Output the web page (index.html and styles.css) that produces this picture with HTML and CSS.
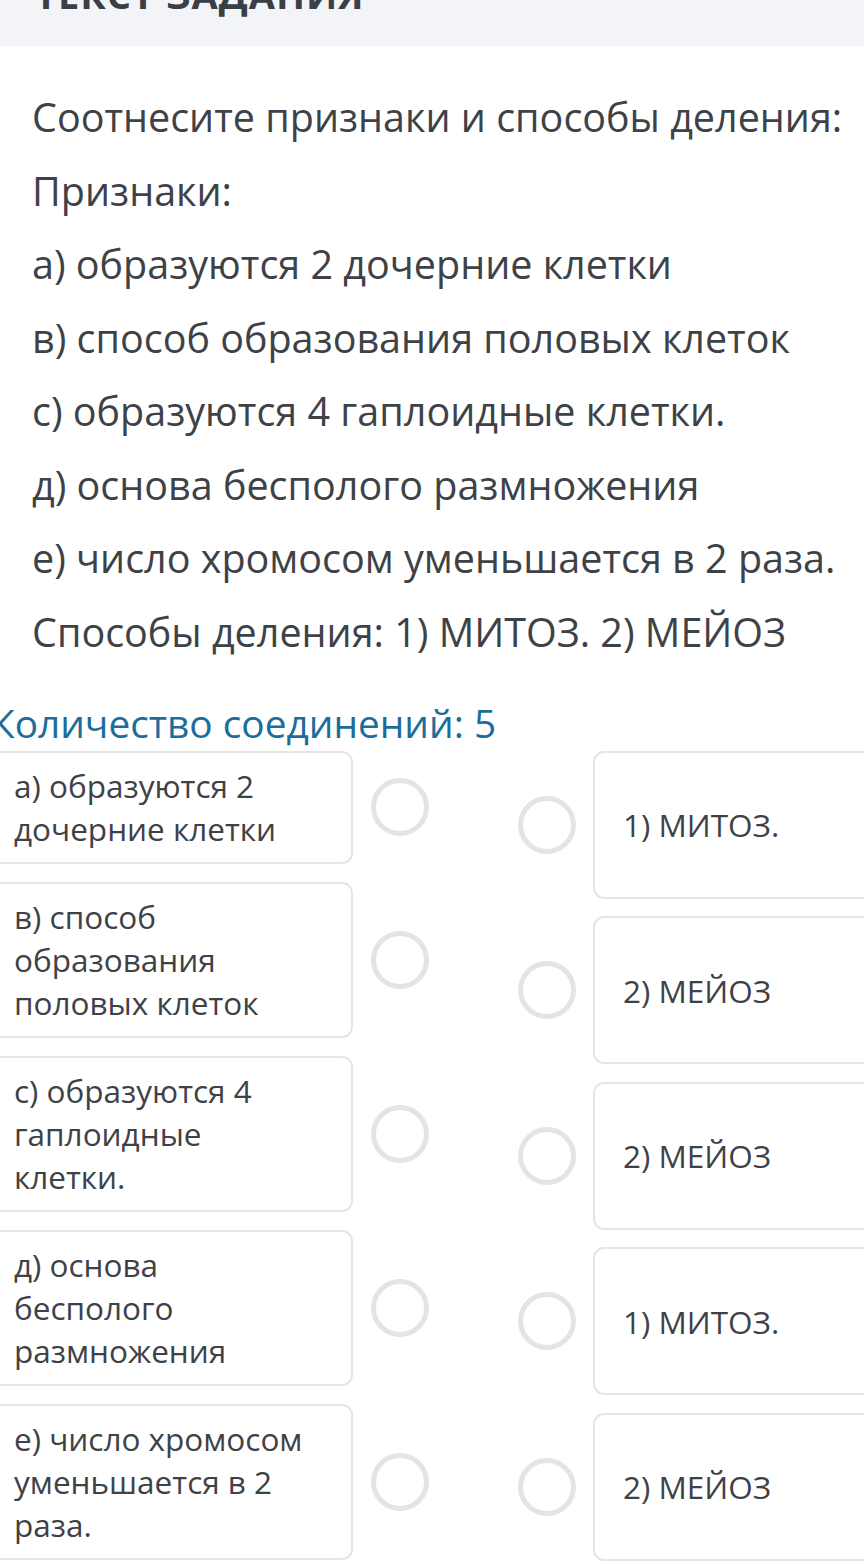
FILE: index.html
```html
<!DOCTYPE html>
<html lang="ru">
<head>
    <meta charset="UTF-8">
    <meta name="viewport" content="width=device-width, initial-scale=1.0">
    <title>Текст задания</title>
    <link rel="stylesheet" href="styles.css">
</head>
<body>

    <div class="task-header">
        <h2>ТЕКСТ ЗАДАНИЯ</h2>
    </div>

    <div class="task-text">
        <p>Соотнесите признаки и способы деления:</p>
        <p>Признаки:</p>
        <p>а) образуются 2 дочерние клетки</p>
        <p>в) способ образования половых клеток</p>
        <p>с) образуются 4 гаплоидные клетки.</p>
        <p>д) основа бесполого размножения</p>
        <p>е) число хромосом уменьшается в 2 раза.</p>
        <p>Способы деления: 1) МИТОЗ. 2) МЕЙОЗ</p>
    </div>

    <div class="match-title">Количество соединений: 5</div>

    <div class="match-board">
        <div class="match-col left-col">
            <div class="match-row">
                <div class="item left-item">а) образуются 2 дочерние клетки</div>
                <span class="dot"></span>
            </div>
            <div class="match-row">
                <div class="item left-item">в) способ образования половых клеток</div>
                <span class="dot"></span>
            </div>
            <div class="match-row">
                <div class="item left-item">с) образуются 4 гаплоидные клетки.</div>
                <span class="dot"></span>
            </div>
            <div class="match-row">
                <div class="item left-item">д) основа бесполого размножения</div>
                <span class="dot"></span>
            </div>
            <div class="match-row">
                <div class="item left-item">е) число хромосом уменьшается в 2 раза.</div>
                <span class="dot"></span>
            </div>
        </div>

        <div class="match-col right-col">
            <div class="match-row">
                <span class="dot"></span>
                <div class="item right-item">1) МИТОЗ.</div>
            </div>
            <div class="match-row">
                <span class="dot"></span>
                <div class="item right-item">2) МЕЙОЗ</div>
            </div>
            <div class="match-row">
                <span class="dot"></span>
                <div class="item right-item">2) МЕЙОЗ</div>
            </div>
            <div class="match-row">
                <span class="dot"></span>
                <div class="item right-item">1) МИТОЗ.</div>
            </div>
            <div class="match-row">
                <span class="dot"></span>
                <div class="item right-item">2) МЕЙОЗ</div>
            </div>
        </div>
    </div>

</body>
</html>
```

FILE: styles.css
```css
body {
    margin: 0;
    padding: 0;
    overflow: hidden;
    font-family: "Open Sans", "Noto Sans", sans-serif;
    background-color: #ffffff;
    color: #3e4247;
}

.task-header {
    height: 46px;
    overflow: hidden;
    background-color: #f3f4f7;
}

.task-header h2 {
    margin: -28px 0 0 35px;
    font-size: 38px;
    line-height: 44px;
    font-weight: 700;
    color: #3a3f45;
    letter-spacing: 1px;
}

.task-text {
    padding: 45px 0 0 32px;
}

.task-text p {
    margin: 0 0 21.5px 0;
    font-size: 39.5px;
    line-height: 52px;
    white-space: nowrap;
}

.match-title {
    margin: 41px 0 0 -9px;
    font-size: 38.8px;
    line-height: 48px;
    color: #1c6d9b;
    white-space: nowrap;
}

.match-board {
    display: flex;
    margin: 4px 0 0 -12px;
}

.match-col {
    display: flex;
    flex-direction: column;
}

.left-col {
    gap: 18px;
}

.right-col {
    gap: 17.5px;
    margin-left: 89px;
}

.match-row {
    display: flex;
    align-items: center;
}

.item {
    box-sizing: border-box;
    border: 2px solid #e3e5e8;
    border-radius: 11px;
    font-size: 31.5px;
    line-height: 43px;
}

.left-item {
    width: 365px;
    padding: 11.5px 41px 11.5px 24px;
}

.right-item {
    width: 300px;
    height: 148px;
    display: flex;
    align-items: center;
    padding-left: 28px;
}

.dot {
    box-sizing: border-box;
    flex: none;
    width: 58px;
    height: 58px;
    border: 5px solid #e1e4e8;
    border-radius: 50%;
}

.left-col .dot {
    margin-left: 18px;
}

.right-col .dot {
    margin-right: 17px;
}
```
